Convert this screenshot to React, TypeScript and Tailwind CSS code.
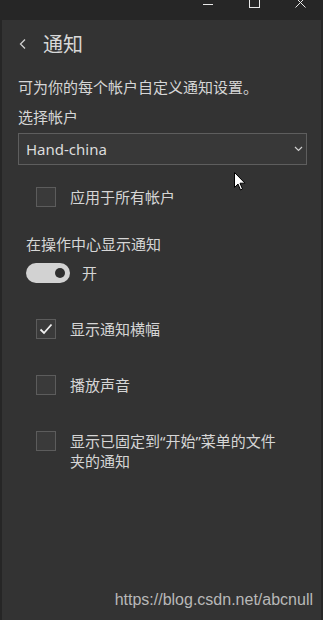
import { ReactNode } from "react";

const cjk = { fontFamily: '"Noto Sans CJK SC", "Noto Sans", sans-serif' };
const latin = { fontFamily: '"Noto Sans", sans-serif' };

const CheckBox = ({ checked }: { checked?: boolean }) => (
    <div className="w-[20px] h-[20px] shrink-0 border border-[#5c5c5c] bg-[#3a3a3a] flex items-center justify-center">
        {checked && (
            <svg width="14" height="12" viewBox="0 0 14 12">
                <path d="M1.5 6.5 L5 10 L12.5 1.5" fill="none" stroke="#f0f0f0" strokeWidth="1.8" />
            </svg>
        )}
    </div>
);

const CheckRow = ({ checked, className, children }: { checked?: boolean; className: string; children: ReactNode }) => (
    <div className={"flex items-start gap-[14px] pl-[18px] " + className}>
        <CheckBox checked={checked} />
        <p className="text-[15px] leading-[20px] text-[#d6d6d6]">{children}</p>
    </div>
);

const App = () => {
    return (
        <div className="w-[323px] h-[620px] bg-[#262626] flex flex-col overflow-hidden relative" style={cjk}>
            {/* window caption */}
            <div className="h-[20px] shrink-0 flex justify-end">
                <div className="w-[46px] flex justify-center">
                    <svg width="10" height="10" viewBox="0 0 10 10" className="-mt-[1px]">
                        <path d="M0 5.5 H10" stroke="#e8e8e8" strokeWidth="1" />
                    </svg>
                </div>
                <div className="w-[46px] flex justify-center">
                    <svg width="11" height="11" viewBox="0 0 11 11" className="-mt-[3px]">
                        <rect x="0.5" y="0.5" width="10" height="10" fill="none" stroke="#e8e8e8" strokeWidth="1" />
                    </svg>
                </div>
                <div className="w-[46px] flex justify-center">
                    <svg width="11" height="11" viewBox="0 0 11 11" className="-mt-[3px]">
                        <path d="M0.5 0.5 L10.5 10.5 M10.5 0.5 L0.5 10.5" stroke="#e8e8e8" strokeWidth="1" />
                    </svg>
                </div>
            </div>

            <div className="flex-1 ml-[2px] mr-[2px] bg-[#333333] flex flex-col pl-[16px] pr-[14px]">
                <div className="mt-[10px] h-[28px] flex items-center">
                    <svg width="8" height="10" viewBox="0 0 8 10" className="ml-[1px]">
                        <path d="M6 0.5 L1.5 5 L6 9.5" fill="none" stroke="#d0d0d0" strokeWidth="1.3" />
                    </svg>
                    <h1 className="ml-[16px] text-[20px] leading-[28px] text-[#d8d8d8]">通知</h1>
                </div>

                <p className="mt-[19px] text-[15px] leading-[20px] text-[#d6d6d6]">可为你的每个帐户自定义通知设置。</p>
                <p className="mt-[10px] text-[15px] leading-[20px] text-[#d6d6d6]">选择帐户</p>

                <div className="mt-[6px] h-[32px] border border-[#5e5e5e] bg-[#383838] flex items-center justify-between pl-[7px] pr-[3px]">
                    <span className="text-[15px] text-[#dcdcdc]" style={latin}>Hand-china</span>
                    <svg width="9" height="6" viewBox="0 0 9 6">
                        <path d="M1 1 L4.5 4.5 L8 1" fill="none" stroke="#d0d0d0" strokeWidth="1.2" />
                    </svg>
                </div>

                <CheckRow className="mt-[22px]">应用于所有帐户</CheckRow>

                <p className="mt-[27px] ml-[8px] text-[15px] leading-[20px] text-[#d6d6d6]">在操作中心显示通知</p>
                <div className="mt-[9px] ml-[8px] flex items-center gap-[12px]">
                    <div className="w-[44px] h-[20px] rounded-full bg-[#d2d2d2] flex items-center justify-end pr-[5px]">
                        <div className="w-[10px] h-[10px] rounded-full bg-[#2e2e2e]" />
                    </div>
                    <span className="text-[15px] leading-[20px] text-[#d6d6d6]">开</span>
                </div>

                <CheckRow checked className="mt-[36px]">显示通知横幅</CheckRow>
                <CheckRow className="mt-[36px]">播放声音</CheckRow>
                <CheckRow className="mt-[36px]">
                    显示已固定到<span style={latin}>“</span>开始<span style={latin}>”</span>菜单的文件
                    <br />
                    夹的通知
                </CheckRow>
            </div>

            {/* mouse pointer */}
            <svg width="12" height="19" viewBox="0 0 12 19" className="absolute left-[234px] top-[172px]">
                <path d="M0.5 0.5 L0.5 15.5 L4 12 L6.5 18 L8.5 17 L6 11.2 L11 11.2 Z" fill="#ffffff" stroke="#000000" strokeWidth="1" />
            </svg>

            <span
                className="absolute right-[10px] top-[590px] text-[16px] leading-[20px] text-[#b8b8b8]"
                style={{ fontFamily: '"Liberation Sans", Arial, sans-serif' }}
            >
                https://blog.csdn.net/abcnull
            </span>
        </div>
    );
};

export default App;
